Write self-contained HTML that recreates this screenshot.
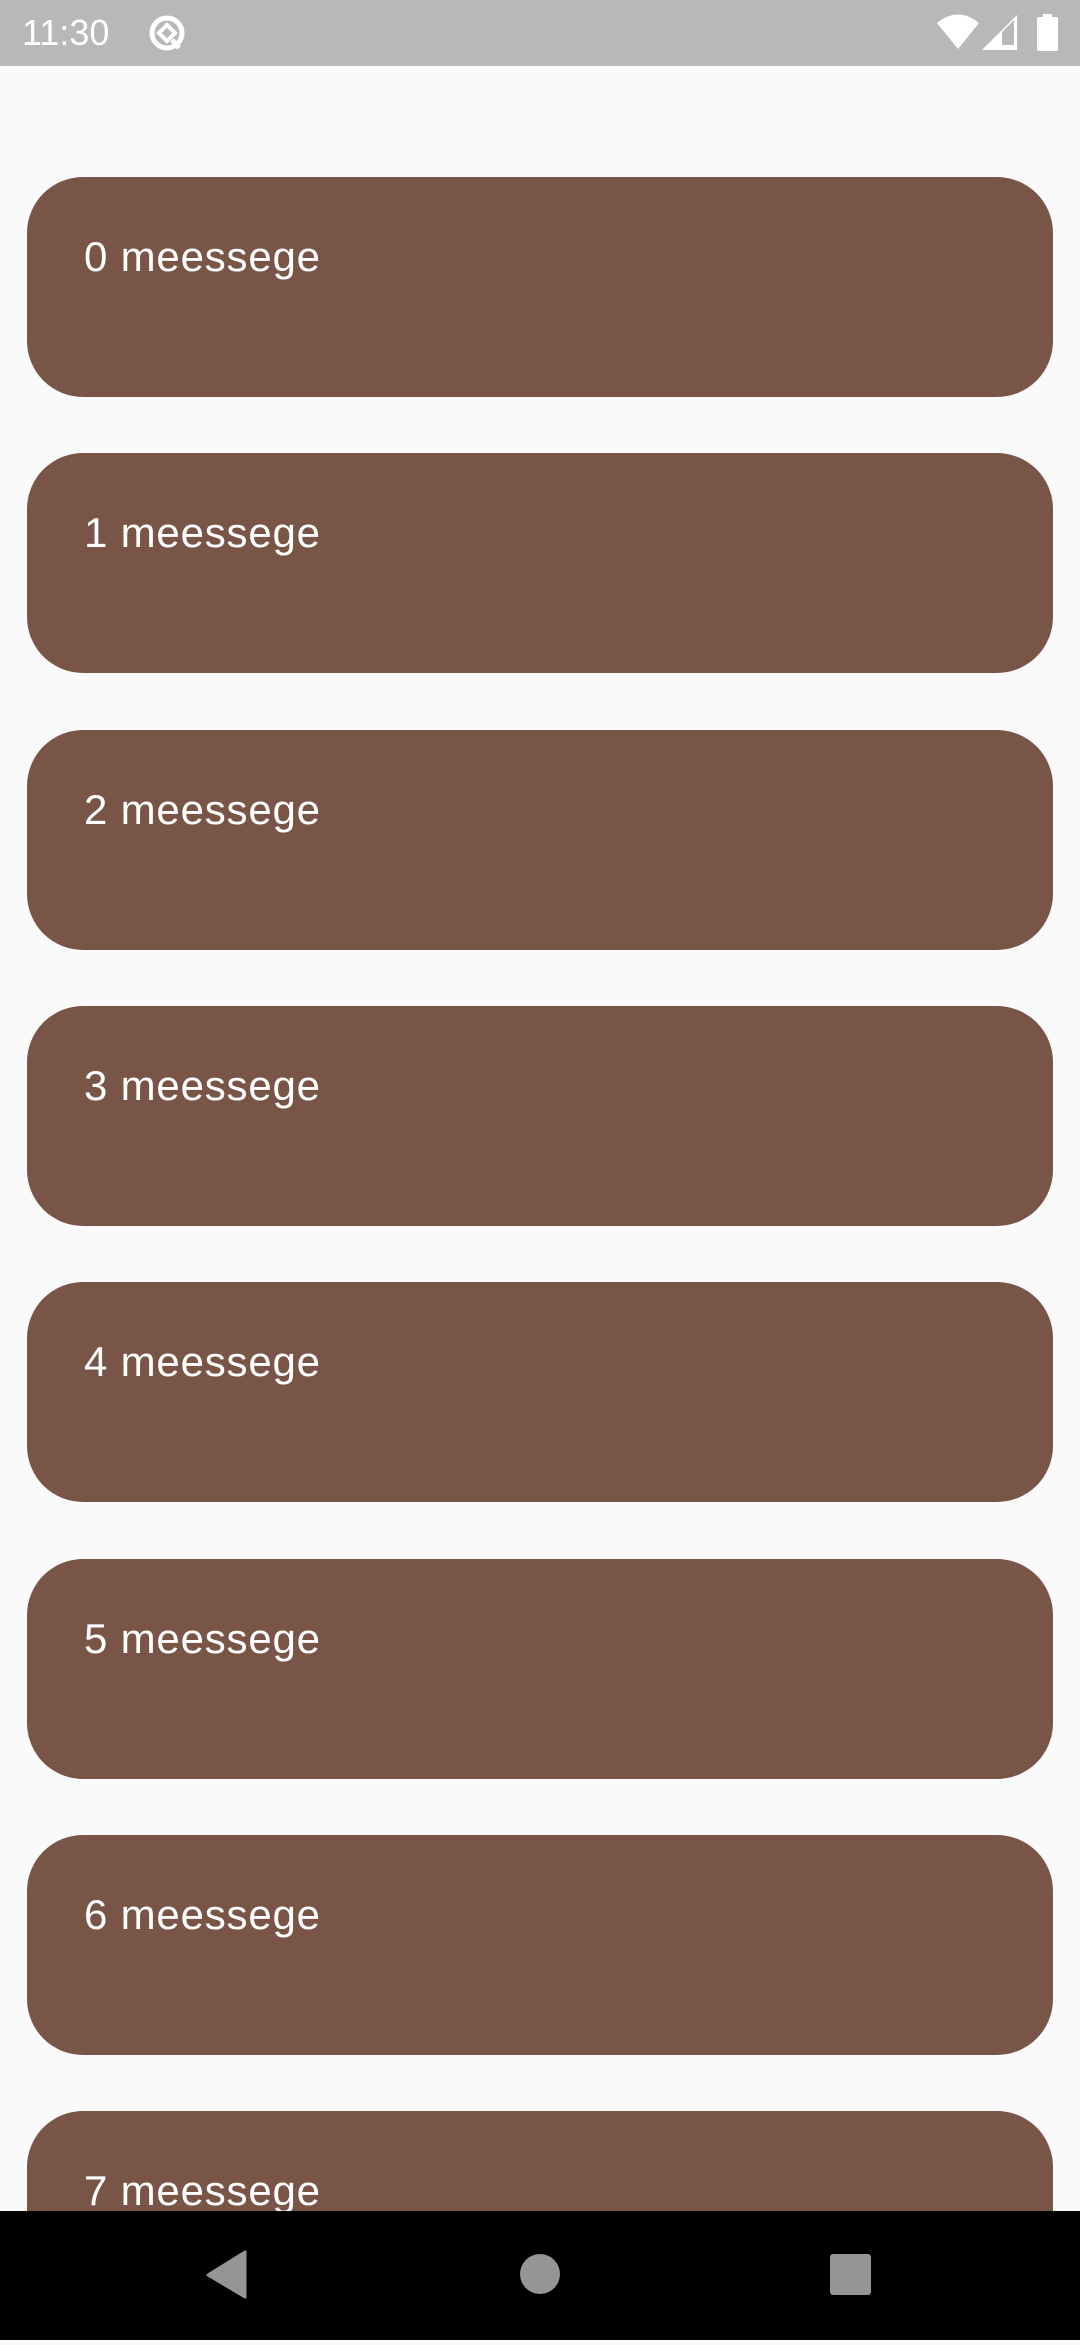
<!DOCTYPE html>
<html><head><meta charset="utf-8"><style>
body{margin:0;width:1080px;height:2340px;background:#fafafa;position:relative;overflow:hidden;font-family:"Liberation Sans",sans-serif}
.sb{position:absolute;top:0;left:0;width:1080px;height:66px;background:#b8b8b8}
.time{position:absolute;left:22px;top:12px;color:#fff;font-size:36px}
.card{position:absolute;left:27px;width:1026px;height:220px;background:#795548;border-radius:56px}
.card span{position:absolute;left:57px;top:56px;color:#fff;font-size:42px;letter-spacing:0.8px}
.nav{position:absolute;left:0;top:2211px;width:1080px;height:129px;background:#000}
</style></head><body>
<div class="sb"><div class="time">11:30</div>
<svg style="position:absolute;left:148px;top:14px" width="40" height="40" viewBox="0 0 40 40"><circle cx="19" cy="19" r="15" fill="none" stroke="#fff" stroke-width="5"/><path d="M19 11 L27 19 L19 27 L11 19Z" fill="none" stroke="#fff" stroke-width="4"/><path d="M24 26 L31 34" stroke="#fff" stroke-width="5"/></svg>
<svg style="position:absolute;left:930px;top:12px" width="140" height="42" viewBox="0 0 140 42"><path d="M7 11 Q28 -6 49 11 L28 37Z" fill="#fff"/><path d="M52 38 L87 3 L87 38Z" fill="#fff"/><path d="M72 33 L72 20 L84 8 L84 33Z" fill="#b8b8b8"/><rect x="107" y="5" width="21" height="34" rx="2" fill="#fff"/><rect x="113" y="2" width="9" height="4" fill="#fff"/></svg>
</div>
<div class="card" style="top:177px"><span>0 meessege</span></div>
<div class="card" style="top:453px"><span>1 meessege</span></div>
<div class="card" style="top:730px"><span>2 meessege</span></div>
<div class="card" style="top:1006px"><span>3 meessege</span></div>
<div class="card" style="top:1282px"><span>4 meessege</span></div>
<div class="card" style="top:1559px"><span>5 meessege</span></div>
<div class="card" style="top:1835px"><span>6 meessege</span></div>
<div class="card" style="top:2111px"><span>7 meessege</span></div>
<div class="nav">
<svg width="1080" height="129" viewBox="0 0 1080 129"><path d="M245 41 L245 86 L208 64Z" fill="#959595" stroke="#959595" stroke-width="3" stroke-linejoin="round"/><circle cx="540" cy="63" r="20" fill="#959595"/><rect x="830" y="43" width="41" height="41" rx="3" fill="#959595"/></svg>
</div>
</body></html>
